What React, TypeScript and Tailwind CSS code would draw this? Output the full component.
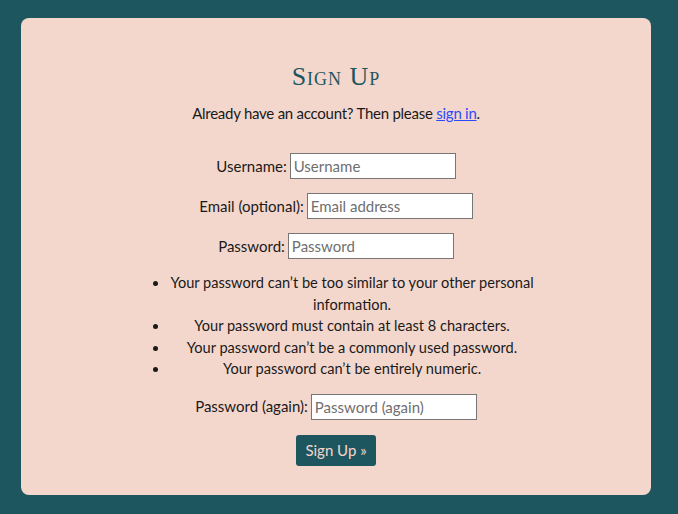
export default function App() {
  const rows = [
    { label: "Username:", ph: "Username", type: "text" },
    { label: "Email (optional):", ph: "Email address", type: "email" },
    { label: "Password:", ph: "Password", type: "password" },
  ];
  const Row = ({ label, ph, type }: { label: string; ph: string; type: string }) => (
    <div className="flex items-center justify-center h-[26px]">
      <label className="mr-[3px]">{label}</label>
      <input
        type={type}
        placeholder={ph}
        className="w-[166px] h-[26px] border border-[#767676] bg-white px-[3px] text-[15px] text-[#222] placeholder:text-[#6f6f6f] outline-none"
        style={{ fontFamily: "Lato, sans-serif" }}
      />
    </div>
  );
  return (
    <div
      className="min-h-[514px] w-[678px] bg-[#1e565f] pt-[18px] pb-[18px]"
      style={{ fontFamily: "Lato, 'Liberation Sans', sans-serif" }}
    >
      <div className="ml-[21px] w-[630px] h-[477px] rounded-[8px] bg-[#f4d7cc] pt-[43px] text-[15px] text-[#1a1a1a] flex flex-col items-center">
        <h1
          className="text-[26px] leading-[32px] text-[#1e565f] tracking-[1px]"
          style={{ fontFamily: "'Liberation Serif', serif", fontVariant: "small-caps" }}
        >
          Sign Up
        </h1>
        <p className="mt-[9px] leading-[22px] tracking-[-0.25px]">
          Already have an account? Then please{" "}
          <a href="#" className="text-[#2a4bff] underline">
            sign in
          </a>
          .
        </p>
        <div className="mt-[29px] flex flex-col gap-[14px] w-full">
          {rows.map((r) => (
            <Row key={r.label} {...r} />
          ))}
        </div>
        <ul className="mt-[13px] w-[398px] pl-8 list-disc text-center text-[14.6px] leading-[21.5px]">
          <li>Your password can’t be too similar to your other personal information.</li>
          <li>Your password must contain at least 8 characters.</li>
          <li>Your password can’t be a commonly used password.</li>
          <li>Your password can’t be entirely numeric.</li>
        </ul>
        <div className="mt-[14px] w-full">
          <Row label="Password (again):" ph="Password (again)" type="password" />
        </div>
        <button className="mt-[15px] h-[31px] px-[9px] rounded-[3px] bg-[#1e565f] text-[#f4d7cc] text-[15px]">
          Sign Up »
        </button>
      </div>
    </div>
  );
}
